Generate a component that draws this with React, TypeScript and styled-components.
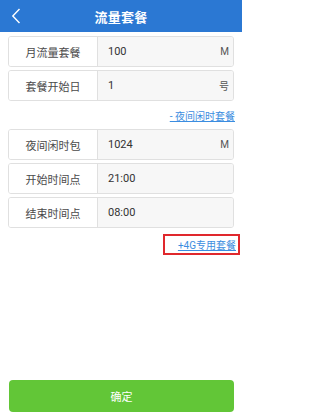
import React from 'react'
import styled, { createGlobalStyle } from 'styled-components'

const GlobalStyle = createGlobalStyle`
  html, body {
    margin: 0;
    padding: 0;
    background: #fff;
  }
  body {
    font-family: Roboto, "Noto Sans CJK SC", sans-serif;
  }
`

interface FieldProps {
  label: string,
  value: string,
  unit?: string,
}

const Field: React.FC<FieldProps> = ({ label, value, unit }) => (
  <StyledField>
    <StyledLabel>{label}</StyledLabel>
    <StyledValue>
      <span>{value}</span>
      {unit && <StyledUnit>{unit}</StyledUnit>}
    </StyledValue>
  </StyledField>
)

const App: React.FC = () => {
  return (
    <StyledPage>
      <GlobalStyle />
      <StyledHeader>
        <StyledBack>
          <svg width="10" height="16" viewBox="0 0 10 16">
            <path d="M8.5 1 L1.8 8 L8.5 15" fill="none" stroke="#fff" strokeWidth="1.4" />
          </svg>
        </StyledBack>
        <StyledTitle>流量套餐</StyledTitle>
      </StyledHeader>

      <StyledBody>
        <StyledGroup>
          <Field label="月流量套餐" value="100" unit="M" />
          <Field label="套餐开始日" value="1" unit="号" />
        </StyledGroup>

        <StyledLinkRow>
          <StyledLink>- 夜间闲时套餐</StyledLink>
        </StyledLinkRow>

        <StyledGroup>
          <Field label="夜间闲时包" value="1024" unit="M" />
          <Field label="开始时间点" value="21:00" />
          <Field label="结束时间点" value="08:00" />
        </StyledGroup>

        <StyledLinkRow>
          <StyledLink boxed>+4G专用套餐</StyledLink>
        </StyledLinkRow>
      </StyledBody>

      <StyledFooter>
        <StyledButton>确定</StyledButton>
      </StyledFooter>
    </StyledPage>
  )
}

const StyledPage = styled.div`
  width: 242px;
  height: 416px;
  display: flex;
  flex-direction: column;
  background: #fff;
`

const StyledHeader = styled.div`
  height: 32px;
  background: #2b78d3;
  display: flex;
  align-items: center;
  justify-content: center;
  position: relative;
`

const StyledBack = styled.div`
  position: absolute;
  left: 11px;
  top: 8px;
  display: flex;
`

const StyledTitle = styled.div`
  color: #fff;
  font-size: 13px;
  font-weight: 700;
  letter-spacing: 0.3px;
`

const StyledBody = styled.div`
  padding: 4px 8px 0 8px;
  display: flex;
  flex-direction: column;
`

const StyledGroup = styled.div`
  display: flex;
  flex-direction: column;
  gap: 3px;
`

const StyledField = styled.div`
  height: 29px;
  display: flex;
  border: 1px solid #e0e0e0;
  border-radius: 3px;
  overflow: hidden;
`

const StyledLabel = styled.div`
  width: 88px;
  flex-shrink: 0;
  display: flex;
  align-items: center;
  justify-content: center;
  background: #fff;
  border-right: 1px solid #e0e0e0;
  color: #4a4a4a;
  font-size: 11px;
`

const StyledValue = styled.div`
  flex: 1;
  display: flex;
  align-items: center;
  justify-content: space-between;
  padding: 0 4px 0 10px;
  background: #f7f7f7;
  color: #333;
  font-size: 11px;
`

const StyledUnit = styled.span`
  color: #555;
  font-size: 10px;
`

const StyledLinkRow = styled.div`
  height: 28px;
  display: flex;
  align-items: center;
  justify-content: flex-end;
`

const StyledLink = styled.span<{ boxed?: boolean }>`
  color: #3b8de0;
  font-size: 10px;
  text-decoration: underline;
  padding: ${props => props.boxed ? '1px 2px 1px 13px' : '0'};
  margin-right: ${props => props.boxed ? '-6px' : '-1px'};
  margin-top: ${props => props.boxed ? '4px' : '0'};
  border: ${props => props.boxed ? '2px solid #e0282d' : 'none'};
`

const StyledFooter = styled.div`
  margin-top: auto;
  padding: 0 8px 4px 9px;
`

const StyledButton = styled.div`
  height: 32px;
  border-radius: 4px;
  background: #62c637;
  color: #fff;
  font-size: 11px;
  display: flex;
  align-items: center;
  justify-content: center;
`

export default App
